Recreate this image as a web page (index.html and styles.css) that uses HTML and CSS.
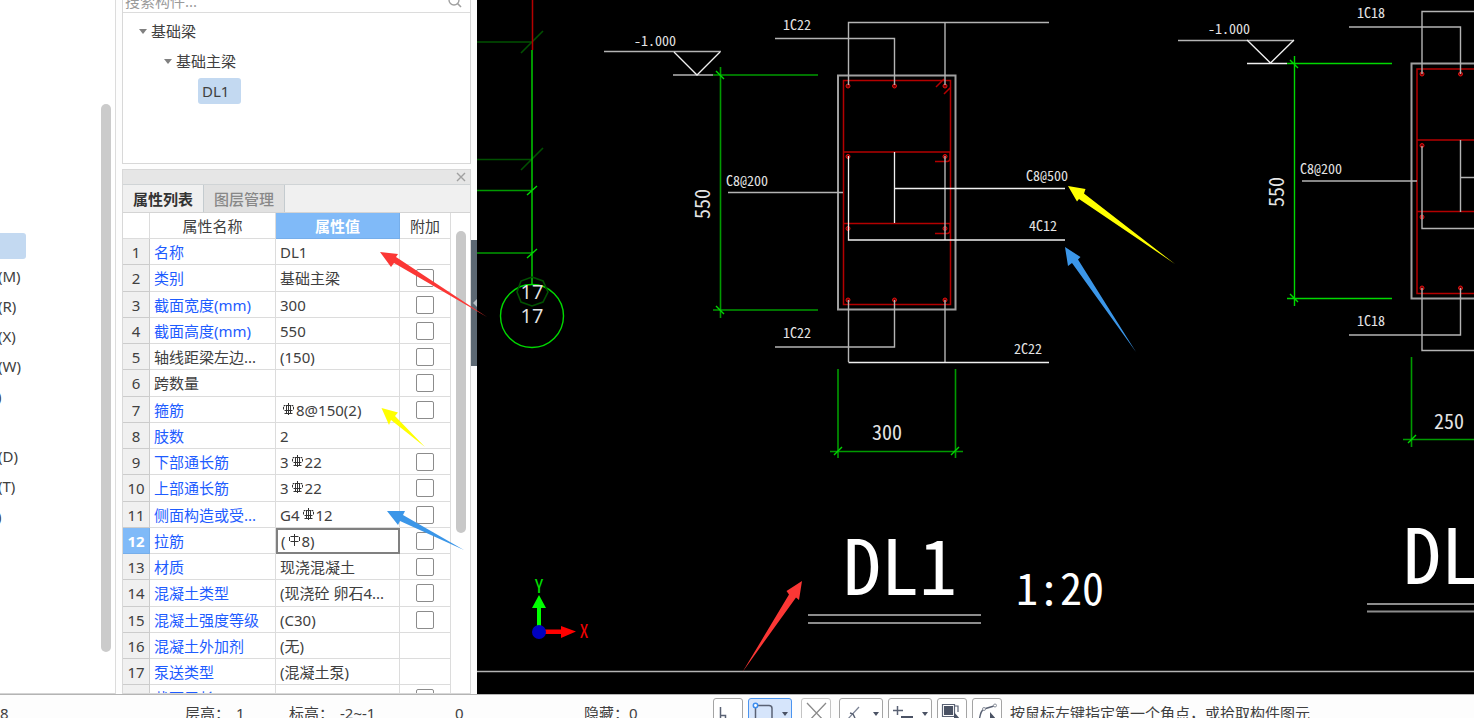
FILE: index.html
```html
<!DOCTYPE html>
<html lang="zh-CN">
<head>
<meta charset="utf-8">
<title>基础梁 - DL1</title>
<link rel="stylesheet" href="styles.css">
</head>
<body>
<svg class="defs" aria-hidden="true">
  <symbol id="rebar3" viewBox="0 0 16 14"><path d="M5.500 3.500h6M3.500 5v2.500M13.500 5v2.500M5 3.500h-1v1M12 3.500h1v1M4.500 8.500h8M6.500 3.500v8M10.500 3.500v8M8.500 1v12M4.500 11.500h8" fill="none" stroke="#333"/></symbol>
  <symbol id="rebar1" viewBox="0 0 16 14"><path d="M4.500 3.500h8M3.500 4v4M13.500 4v4M4.500 8.500h8M8.500 1v12" fill="none" stroke="#333"/></symbol>
</svg>
<div class="app">
  <div class="workspace">
    <nav class="modules">
      <ul class="module-list">
        <li class="selected"></li>
        <li>(M)</li><li>(R)</li><li>(X)</li><li>(W)</li>
        <li class="tail">)</li><li></li>
        <li>(D)</li><li>(T)</li><li class="tail">)</li>
      </ul>
      <div class="nav-scroll"><div class="nav-thumb"></div></div>
    </nav>

    <div class="side">
      <section class="components">
        <label class="search">
          <input type="text" placeholder="搜索构件..." aria-label="搜索构件">
          <svg width="14" height="14" viewBox="0 0 14 14"><circle cx="6" cy="6" r="5" fill="none" stroke="#a0a0a0" stroke-width="1.4"/><path d="M9.5 9.5l3.5 3.5" stroke="#a0a0a0" stroke-width="1.6"/></svg>
        </label>
        <ul class="tree">
          <li class="level1"><i class="caret"></i>基础梁</li>
          <li class="level2"><i class="caret"></i>基础主梁</li>
          <li class="level3"><span>DL1</span></li>
        </ul>
      </section>

      <section class="properties">
        <header class="titlebar">
          <button class="close" aria-label="关闭"><svg width="10" height="10" viewBox="0 0 10 10"><path d="M1 1l8 8M9 1l-8 8" stroke="#a0a0a0" stroke-width="1.4"/></svg></button>
        </header>
        <div class="tabs">
          <button class="tab active">属性列表</button><button class="tab">图层管理</button>
        </div>
        <div class="grid-area">
          <table class="grid">
            <colgroup><col class="c-num"><col class="c-name"><col class="c-value"><col class="c-add"></colgroup>
            <thead><tr><th></th><th>属性名称</th><th class="on">属性值</th><th>附加</th></tr></thead>
            <tbody>
              <tr><th>1</th><td class="name">名称</td><td>DL1</td><td class="add"></td></tr>
              <tr><th>2</th><td class="name">类别</td><td>基础主梁</td><td class="add"><input type="checkbox" aria-label="类别"></td></tr>
              <tr><th>3</th><td class="name">截面宽度(mm)</td><td>300</td><td class="add"><input type="checkbox" aria-label="截面宽度"></td></tr>
              <tr><th>4</th><td class="name">截面高度(mm)</td><td>550</td><td class="add"><input type="checkbox" aria-label="截面高度"></td></tr>
              <tr><th>5</th><td>轴线距梁左边...</td><td>(150)</td><td class="add"><input type="checkbox" aria-label="轴线距梁左边"></td></tr>
              <tr><th>6</th><td>跨数量</td><td></td><td class="add"><input type="checkbox" aria-label="跨数量"></td></tr>
              <tr><th>7</th><td class="name">箍筋</td><td><svg class="bar"><use href="#rebar3"/></svg>8@150(2)</td><td class="add"><input type="checkbox" aria-label="箍筋"></td></tr>
              <tr><th>8</th><td class="name">肢数</td><td>2</td><td class="add"></td></tr>
              <tr><th>9</th><td class="name">下部通长筋</td><td>3<svg class="bar"><use href="#rebar3"/></svg>22</td><td class="add"><input type="checkbox" aria-label="下部通长筋"></td></tr>
              <tr><th>10</th><td class="name">上部通长筋</td><td>3<svg class="bar"><use href="#rebar3"/></svg>22</td><td class="add"><input type="checkbox" aria-label="上部通长筋"></td></tr>
              <tr><th>11</th><td class="name">侧面构造或受...</td><td>G4<svg class="bar"><use href="#rebar3"/></svg>12</td><td class="add"><input type="checkbox" aria-label="侧面构造"></td></tr>
              <tr><th class="on">12</th><td class="name">拉筋</td><td class="editing">(<svg class="bar"><use href="#rebar1"/></svg>8)</td><td class="add"><input type="checkbox" aria-label="拉筋"></td></tr>
              <tr><th>13</th><td class="name">材质</td><td>现浇混凝土</td><td class="add"><input type="checkbox" aria-label="材质"></td></tr>
              <tr><th>14</th><td class="name">混凝土类型</td><td>(现浇砼 卵石4...</td><td class="add"><input type="checkbox" aria-label="混凝土类型"></td></tr>
              <tr><th>15</th><td class="name">混凝土强度等级</td><td>(C30)</td><td class="add"><input type="checkbox" aria-label="混凝土强度等级"></td></tr>
              <tr><th>16</th><td class="name">混凝土外加剂</td><td>(无)</td><td class="add"></td></tr>
              <tr><th>17</th><td class="name">泵送类型</td><td>(混凝土泵)</td><td class="add"></td></tr>
              <tr><th></th><td class="name">截面周长</td><td></td><td class="add"><input type="checkbox" aria-label="截面周长"></td></tr>
            </tbody>
          </table>
          <div class="grid-scroll"><div class="grid-thumb"></div></div>
        </div>
      </section>
    </div>

    <div class="splitter"><button class="collapse" aria-label="折叠"><svg width="5" height="10" viewBox="0 0 5 10"><path d="M5 1v8L1 5z" fill="#b8bfc6"/></svg></button></div>

    <main class="canvas">
      <svg class="drawing" viewBox="477 0 997 694" preserveAspectRatio="xMinYMin slice">
        <!-- axis 17 -->
        <g class="dim dark"><path d="M477 42H532M521 53L543 31M477 159.500H532M521 170L543 148"/></g>
        <path class="rebar" d="M532.500 0V50"/>
        <g class="dim"><path d="M477 190.500H532M477 253H532"/></g>
        <g class="bright"><path d="M532 50V285M527 195l10 -9M527 258l10 -9"/><circle cx="532" cy="316" r="31.500"/></g>
        <path class="dim dark" d="M532 277l11 4l5 11l-5 10l-11 4l-11 -4l-4 -10l4 -11z"/>
        <text class="axis" x="532" y="299">17</text>
        <text class="axis" x="532" y="323">17</text>

        <!-- section DL1 -->
        <path class="leader" d="M604 51.500H721M673 75H713"/>
        <path class="outline" d="M674 52L697 75L720 52"/>
        <g class="dim"><path d="M713 75H818M720.500 67V318M713 310H818M838 369V458M955.500 369V458M830 451.500H963"/></g>
        <path class="bright" d="M716 71l8 8M716 306l8 8M834 455l8 -8M951 455l8 -8"/>
        <path class="outline soft" d="M838 75.500H955.500V309.500H838z"/>
        <path class="rebar" d="M843.500 80.500H950.500V304.500H843.500zM843.500 152H950M843.500 223.500H950M936 87l8 -8M944 94l7 -7M935 161.500h12q3 0 3 -4v-5M935 233.500h12q3 0 3 -4v-6"/>
        <g class="dots"><circle cx="848" cy="86" r="2"/><circle cx="894.500" cy="86" r="2"/><circle cx="945" cy="86" r="2"/><circle cx="848" cy="156.500" r="2"/><circle cx="945" cy="156.500" r="2"/><circle cx="848" cy="228.500" r="2"/><circle cx="945" cy="228.500" r="2"/><circle cx="848" cy="300" r="2"/><circle cx="894.500" cy="300" r="2"/><circle cx="945" cy="300" r="2"/></g>
        <path class="leader" d="M775 38.500H894.500V85M848.500 85V22.500H1049M945 22.500V85M728 192.500H843M775 347H894.500V300M945 300V362M945 156V240M848.500 300V362"/>
        <path class="outline" d="M894.500 152V223M894.500 188.500H1065M848.500 156V240H1065M848.500 362.500H1049"/>
        <text class="label" x="655" y="46">-1.000</text>
        <text class="label" x="797" y="30">1C22</text>
        <text class="label" x="747" y="186">C8@200</text>
        <text class="label" x="1047" y="181">C8@500</text>
        <text class="label" x="1043" y="231">4C12</text>
        <text class="label" x="797" y="338">1C22</text>
        <text class="label" x="1028" y="354">2C22</text>
        <text class="measure" x="887" y="440">300</text>
        <text class="measure" transform="translate(710 204) rotate(-90)">550</text>
        <text class="title" x="900" y="595">DL1</text>
        <path class="leader thick" d="M808 615H981M808 623H981"/>
        <text class="scale" x="1060" y="605">1:20</text>

        <!-- neighbouring section, cut by the window edge -->
        <path class="leader" d="M1178 40.500H1294"/>
        <path class="outline" d="M1247 40L1270.500 63L1294 40M1247 63.500H1287"/>
        <g class="dim"><path d="M1411.500 357V447M1403 439.500H1474"/></g>
        <path class="bright" d="M1287 63.500H1392M1294.500 56V306M1287 298.500H1392M1290 60l8 8M1290 294l8 8M1408 443l8 -8"/>
        <path class="outline soft" d="M1480 63.500H1411.500V298.500H1480"/>
        <path class="rebar" d="M1480 69H1417V293.500H1480M1417 140H1474M1417 211.500H1474"/>
        <g class="dots"><circle cx="1422" cy="74" r="2"/><circle cx="1460.500" cy="74" r="2"/><circle cx="1422" cy="145.500" r="2"/><circle cx="1422" cy="217" r="2"/><circle cx="1422" cy="288" r="2"/><circle cx="1460.500" cy="288" r="2"/></g>
        <path class="leader" d="M1349 27H1460.500V74M1422 74V11.500H1474M1302 181H1417M1460.500 140V212M1460.500 177.500H1474M1422 146V228.500H1474M1349 335H1460.500V288M1422 288V350.500H1474"/>
        <text class="label" x="1229" y="34">-1.000</text>
        <text class="label" x="1371" y="18">1C18</text>
        <text class="label" x="1321" y="174">C8@200</text>
        <text class="label" x="1371" y="326">1C18</text>
        <text class="measure" x="1449" y="429">250</text>
        <text class="measure" transform="translate(1284 192) rotate(-90)">550</text>
        <text class="title start" x="1403" y="584">DL1</text>
        <path class="leader thick" d="M1367 604H1474M1367 611.500H1474"/>
        <path class="leader" d="M477 671.500H1474"/>

        <!-- coordinate axes -->
        <path d="M537 632V608h-5l7 -13l7 13h-5V632z" fill="#0f0"/>
        <path d="M540 629.500H561V626L576 631.500L561 638V634H540z" fill="#f00"/>
        <circle cx="539" cy="632" r="7" fill="#0000c0"/>
        <text class="ucs y" x="539" y="593">Y</text>
        <text class="ucs x" x="584" y="638">X</text>
      </svg>
    </main>
  </div>

  <footer class="status">
    <span class="s-floor">8</span>
    <span class="s-height pair"><span>层高：</span><span>1</span></span>
    <span class="s-level pair"><span>标高：</span><span>-2~-1</span></span>
    <span class="s-count">0</span>
    <span class="s-hidden">隐藏：0</span>
    <div class="tools">
      <button class="tool" aria-label="正交"><svg width="28" height="28" viewBox="0 0 28 28"><path d="M6.500 8v20M6.500 16.500h5v12" fill="none" stroke="#5a6274" stroke-width="1.500"/></svg></button>
      <button class="tool wide active" aria-label="矩形"><svg width="42" height="28" viewBox="0 0 42 28"><path d="M9 6.500h11q3 0 3 3V28M6.500 9v19" fill="none" stroke="#5a6274" stroke-width="1.500"/><circle cx="6.500" cy="6.500" r="2.200" fill="#fff" stroke="#3b8df0" stroke-width="1.500"/><path d="M33 13h6l-3 4z" fill="#4a5264"/></svg></button>
      <button class="tool off" aria-label="取消"><svg width="28" height="28" viewBox="0 0 28 28"><path d="M5 4l19 20M24 4L5 24" fill="none" stroke="#8a8a8a" stroke-width="1.300"/></svg></button>
      <button class="tool wide" aria-label="点"><svg width="42" height="28" viewBox="0 0 42 28"><path d="M7 21l12 -13" fill="none" stroke="#7a8294" stroke-width="1.200"/><path d="M10 14l3 1l2 4" fill="none" stroke="#5a6274" stroke-width="1.500"/><path d="M33 13h6l-3 4z" fill="#4a5264"/></svg></button>
      <button class="tool wide" aria-label="偏移"><svg width="42" height="28" viewBox="0 0 42 28"><path d="M4 11.500h10M8.500 7v9" stroke="#5a6274" stroke-width="1.500"/><path d="M12 17h12v3H12zM33 13h6l-3 4z" fill="#4a5264"/></svg></button>
      <button class="tool" aria-label="选择"><svg width="28" height="28" viewBox="0 0 28 28"><path d="M6 7h9v9H6z" fill="#4a5264"/><path d="M4.500 5.500h12v12h-12zM17 7h3v6" fill="none" stroke="#5a6274" stroke-width="1.200"/><path d="M16 13l6 7h-6z" fill="#4a5264"/></svg></button>
      <button class="tool" aria-label="折线"><svg width="28" height="28" viewBox="0 0 28 28"><path d="M6 24q1 -12 5 -14l10 -3" fill="none" stroke="#5a6274" stroke-width="1.400"/><circle cx="22" cy="6.500" r="1.500" fill="#fff" stroke="#8a909c"/><circle cx="11" cy="10" r="1.500" fill="#fff" stroke="#8a909c"/><path d="M17 13l7 8h-4l-3 3z" fill="#4a5264"/></svg></button>
    </div>
    <span class="s-hint">按鼠标左键指定第一个角点，或拾取构件图元</span>
  </footer>

  <svg class="marks" viewBox="0 0 1474 718" preserveAspectRatio="xMinYMin slice" aria-hidden="true">
    <g fill="#fb3735"><path d="M380 252L398 254L396 257L487 317L394 263L391 267z"/><path d="M802 581L786.500 591L789 594.500L742.500 672L796 597.500L799 600z"/></g>
    <g fill="#ff0"><path d="M381.500 408L398 412.500L395 416L425 447L391 420L389 425z"/><path d="M1068 186L1085.500 189L1084 193.500L1175 264L1079 199L1077 201.500z"/></g>
    <g fill="#3b96e8"><path d="M387 511L405 511L403 515L464 550L400 521L398 525z"/><path d="M1065 247L1080.500 257L1078 259.500L1136 352L1072 263L1068 266z"/></g>
  </svg>
</div>
</body>
</html>
```
FILE: styles.css
```css
* { box-sizing: border-box; }
body {
  margin: 0;
  font: 15px/20px "Noto Sans", "Noto Sans CJK SC", sans-serif;
  color: #404040;
}
button, input { font: inherit; color: inherit; }
button { padding: 0; border: 0; background: none; }
ul { margin: 0; padding: 0; list-style: none; }
svg { display: block; }
.defs { position: absolute; width: 0; height: 0; }

.app {
  position: relative;
  display: flex;
  flex-direction: column;
  height: 100vh;
  overflow: hidden;
  background: #fdfdfd;
}
.workspace { display: flex; flex: 1; min-height: 0; }

/* module list */
.modules {
  display: flex;
  width: 116px;
  background: #fff;
  border-right: 1px solid #dcdcdc;
  border-bottom: 1px solid #d4d4d4;
}
.module-list { flex: 1; padding-top: 230px; }
.module-list li { height: 30px; line-height: 30px; margin-left: -2px; }
.module-list .tail { margin-left: -3px; }
.module-list .selected {
  width: 28px;
  height: 26px;
  margin-top: 3px;
  margin-bottom: 2px;
  border-radius: 3px;
  background: #c3d9f1;
}
.nav-scroll { width: 14px; padding-top: 104px; }
.nav-thumb { width: 10px; height: 548px; border-radius: 5px; background: #cbcbcb; }

/* component tree */
.side { display: flex; flex-direction: column; width: 349px; margin-left: 6px; }
.components {
  height: 164px;
  overflow: hidden;
  background: #fff;
  border: 1px solid #d8d8d8;
  border-top: 0;
}
.search {
  display: flex;
  align-items: center;
  height: 24px;
  margin-top: -11px;
  padding-right: 8px;
  border-bottom: 1px solid #dcdcdc;
}
.search input { flex: 1; min-width: 0; padding: 0 2px; border: 0; outline: 0; background: none; }
.search input::placeholder { color: #9a9a9a; opacity: 1; }
.tree { padding-top: 3px; }
.tree li { display: flex; align-items: center; height: 30px; }
.caret {
  margin-right: 4px;
  border: 4px solid transparent;
  border-top: 5px solid #808080;
  border-bottom: 0;
}
.level1 { padding-left: 16px; }
.level2 { padding-left: 41px; }
.level3 { padding-left: 75px; }
.level3 span { width: 43px; padding: 3px 4px; border-radius: 3px; background: #c3d9f1; }

/* property list */
.properties {
  display: flex;
  flex: 1;
  flex-direction: column;
  min-height: 0;
  margin-top: 5px;
  border: 1px solid #d8d8d8;
  background: #f0f0f0;
}
.titlebar {
  display: flex;
  flex: none;
  justify-content: flex-end;
  align-items: center;
  height: 14px;
  padding-right: 4px;
  background: #e6e6e6;
}
.tabs { display: flex; flex: none; height: 29px; border-top: 1px solid #d0d4d6; border-bottom: 1px solid #d4d4d4; }
.tab { width: 81px; border-right: 1px solid #c4cbcf; background: #e1e1e1; color: #888; font-weight: 500; }
.tab.active { background: #f0f0f0; color: #333; font-weight: 700; }
.grid-area { display: flex; flex: 1; min-height: 0; overflow: hidden; background: #fff; }
.grid { width: 328px; table-layout: fixed; border-collapse: separate; border-spacing: 0; }
.c-num { width: 27px; }
.c-name { width: 126px; }
.c-value { width: 124px; }
.c-add { width: 51px; }
.grid th, .grid td {
  height: 26px;
  padding: 0 4px;
  border-right: 1px solid #dcdcdc;
  border-bottom: 1px solid #dcdcdc;
  text-align: left;
  font-weight: 400;
  line-height: 20px;
  white-space: nowrap;
}
.grid thead th { text-align: center; }
.grid tbody tr:nth-child(4n+2) > * { height: 27px; }
.grid tbody th { padding: 0; text-align: center; background: #f0f0f0; border-color: #ccc; }
.grid th.on, .grid tbody th.on { background: #80baf8; border-color: #76aeea; color: #fff; font-weight: 700; }
.grid .name { color: #1e5cff; }
.grid .editing { padding: 0 3px; border: 2px solid #808080; }
.grid .add { padding: 0; text-align: center; }
.add input {
  display: block;
  appearance: none;
  width: 18px;
  height: 18px;
  margin: 0 auto;
  border: 1px solid #8c8c8c;
  border-radius: 2px;
  background: #fff;
}
.bar { display: inline-block; width: 16px; height: 14px; vertical-align: 0; }
.grid-scroll { flex: 1; padding: 18px 0 0 5px; }
.grid-thumb { width: 10px; height: 302px; border-radius: 5px; background: #c8c8c8; }

.splitter { width: 6px; padding-top: 240px; background: #fdfdfd; }
.collapse { display: flex; align-items: center; justify-content: flex-end; width: 6px; height: 126px; background: #5c6873; }

/* drawing */
.canvas { position: relative; flex: 1; min-width: 0; background: #000; overflow: hidden; }
.drawing { width: 100%; height: 100%; }
.leader { fill: none; stroke: #b4b4b4; stroke-width: 1.4; }
.thick { stroke: #8c8c8c; stroke-width: 2; }
.outline { fill: none; stroke: #f0f0f0; stroke-width: 1.3; }
.soft { stroke: #a0a0a0; stroke-width: 2; }
.rebar { fill: none; stroke: #b40000; stroke-width: 1.5; }
.dots { fill: #700; stroke: #e01010; stroke-width: 1; }
.dim { fill: none; stroke: #009a00; stroke-width: 1.6; }
.dark { stroke: #005000; }
.bright { fill: none; stroke: #00d800; stroke-width: 1.4; }
.drawing text {
  fill: #e4e4e4;
  font-family: "Noto Sans Mono CJK SC", "Noto Sans CJK SC", sans-serif;
  text-anchor: middle;
}
.label { font-size: 14px; }
.measure { font-size: 20px; }
.drawing .title { font-size: 76px; fill: #fff; }
.drawing .start { text-anchor: start; }
.drawing .scale { font-size: 44px; fill: #fff; }
.drawing .axis { font-family: "Open Sans", sans-serif; font-size: 20px; }
.ucs { font-size: 18px; }
.drawing .y { fill: #00e000; }
.drawing .x { fill: #f00000; }

/* status bar */
.status {
  display: flex;
  flex: none;
  align-items: flex-start;
  height: 24px;
  padding-top: 3px;
  border-top: 1px solid #b4b4b4;
  overflow: hidden;
  white-space: nowrap;
}
.status > span { flex: none; padding-top: 5px; }
.pair { display: flex; gap: 6px; }
.s-floor { width: 185px; }
.s-height { width: 104px; }
.s-level { width: 166px; }
.s-count { width: 129px; }
.s-hidden { width: 129px; }
.tools { display: flex; gap: 5px; margin-right: 8px; }
.tool { width: 30px; height: 30px; border: 1px solid #a4a4a4; border-radius: 3px; background: #fff; overflow: hidden; }
.tool.wide { width: 44px; }
.tool.off { margin: 0 3px 0 4px; border-color: #c4c4c4; }
.tool.active { border-color: #4a94f0; background: #d6e5fb; }

.marks { position: absolute; inset: 0; width: 100%; height: 100%; pointer-events: none; }
```
